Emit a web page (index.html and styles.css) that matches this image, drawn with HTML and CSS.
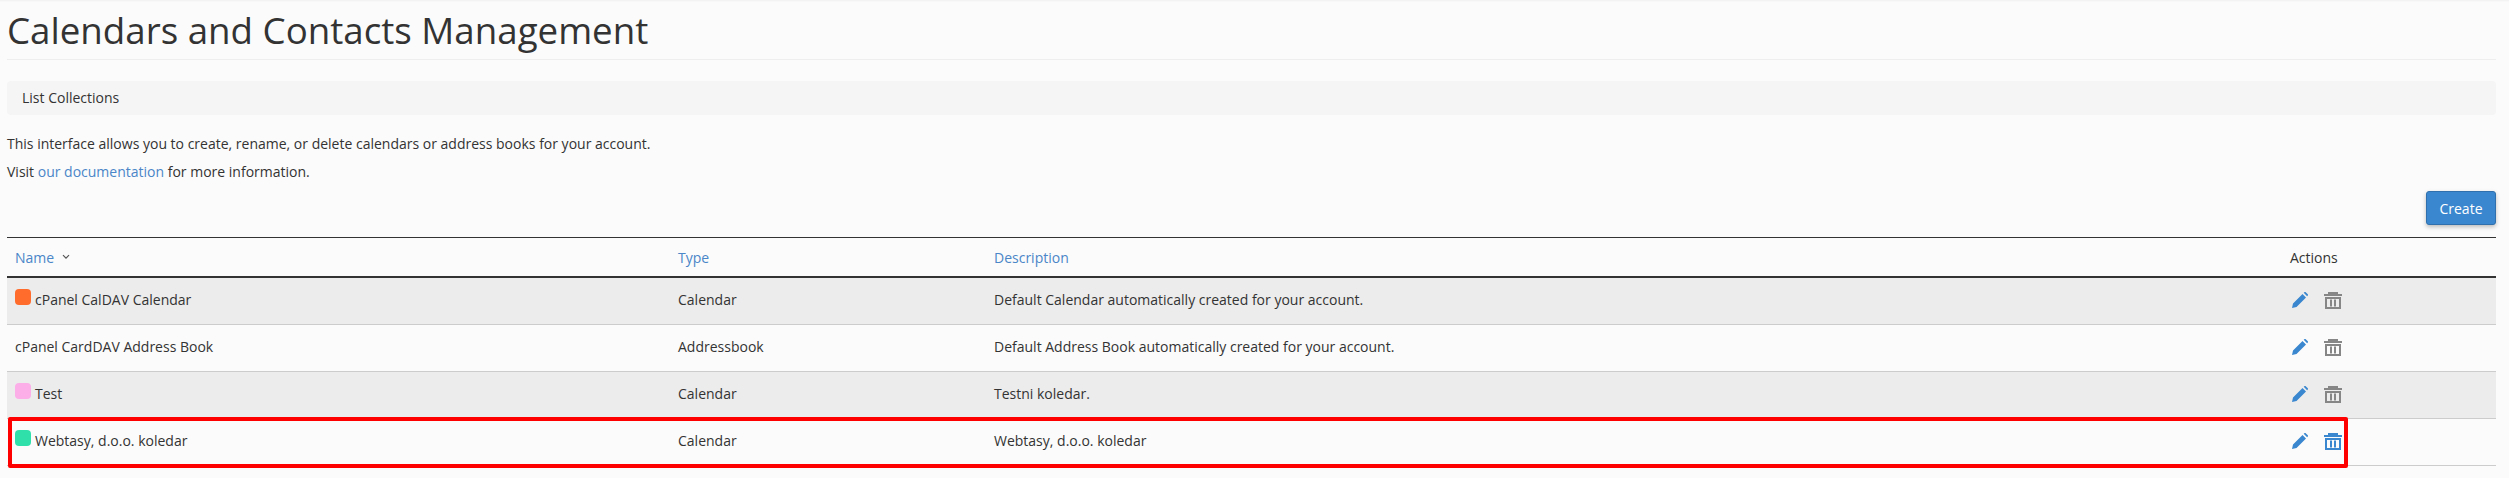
FILE: index.html
```html
<!DOCTYPE html>
<html>
<head>
    <title>Calendars and Contacts Management</title>
    <link rel="stylesheet" href="styles.css">
</head>
<body>
    <h1 class="page-title">Calendars and Contacts Management</h1>
    <div class="breadcrumb">List Collections</div>
    <p class="intro">This interface allows you to create, rename, or delete calendars or address books for your account.</p>
    <p class="intro">Visit <a href="#">our documentation</a> for more information.</p>
    <div class="toolbar">
        <button class="btn-create">Create</button>
    </div>
    <div class="table-wrap">
        <table class="collections">
            <colgroup>
                <col class="col-name">
                <col class="col-type">
                <col class="col-desc">
                <col class="col-actions">
            </colgroup>
            <thead>
                <tr>
                    <th><a href="#">Name</a>
                        <svg class="sort-icon" width="8" height="6" viewBox="0 0 8 6"><path d="M1 1.2 L4 4.2 L7 1.2" fill="none" stroke="#555" stroke-width="1.2"/></svg>
                    </th>
                    <th><a href="#">Type</a></th>
                    <th><a href="#">Description</a></th>
                    <th>Actions</th>
                </tr>
            </thead>
            <tbody>
                <tr class="striped">
                    <td><span class="swatch swatch-orange"></span>cPanel CalDAV Calendar</td>
                    <td>Calendar</td>
                    <td>Default Calendar automatically created for your account.</td>
                    <td class="actions">
                        <svg class="icon-edit" width="16" height="16" viewBox="0 0 16 16"><path d="M0 16 L1 11.5 L10.5 2 L14 5.5 L4.5 15 Z M11.7 0.8 L12.6 0 C13 -0.2 13.4 -0.1 13.7 0.2 L15.8 2.3 C16.1 2.6 16.1 3.1 15.8 3.4 L15.1 4.2 Z"/></svg>
                        <svg class="icon-trash" width="18" height="17" viewBox="0 0 18 17"><path d="M4 0 H14 V2 H18 V4 H0 V2 H4 Z M1 5 H17 V17 H1 Z M3 7 V15 H15 V7 Z M6 7.5 H8 V14.5 H6 Z M10 7.5 H12 V14.5 H10 Z" fill-rule="evenodd"/></svg>
                    </td>
                </tr>
                <tr>
                    <td>cPanel CardDAV Address Book</td>
                    <td>Addressbook</td>
                    <td>Default Address Book automatically created for your account.</td>
                    <td class="actions">
                        <svg class="icon-edit" width="16" height="16" viewBox="0 0 16 16"><path d="M0 16 L1 11.5 L10.5 2 L14 5.5 L4.5 15 Z M11.7 0.8 L12.6 0 C13 -0.2 13.4 -0.1 13.7 0.2 L15.8 2.3 C16.1 2.6 16.1 3.1 15.8 3.4 L15.1 4.2 Z"/></svg>
                        <svg class="icon-trash" width="18" height="17" viewBox="0 0 18 17"><path d="M4 0 H14 V2 H18 V4 H0 V2 H4 Z M1 5 H17 V17 H1 Z M3 7 V15 H15 V7 Z M6 7.5 H8 V14.5 H6 Z M10 7.5 H12 V14.5 H10 Z" fill-rule="evenodd"/></svg>
                    </td>
                </tr>
                <tr class="striped">
                    <td><span class="swatch swatch-pink"></span>Test</td>
                    <td>Calendar</td>
                    <td>Testni koledar.</td>
                    <td class="actions">
                        <svg class="icon-edit" width="16" height="16" viewBox="0 0 16 16"><path d="M0 16 L1 11.5 L10.5 2 L14 5.5 L4.5 15 Z M11.7 0.8 L12.6 0 C13 -0.2 13.4 -0.1 13.7 0.2 L15.8 2.3 C16.1 2.6 16.1 3.1 15.8 3.4 L15.1 4.2 Z"/></svg>
                        <svg class="icon-trash" width="18" height="17" viewBox="0 0 18 17"><path d="M4 0 H14 V2 H18 V4 H0 V2 H4 Z M1 5 H17 V17 H1 Z M3 7 V15 H15 V7 Z M6 7.5 H8 V14.5 H6 Z M10 7.5 H12 V14.5 H10 Z" fill-rule="evenodd"/></svg>
                    </td>
                </tr>
                <tr>
                    <td><span class="swatch swatch-green"></span>Webtasy, d.o.o. koledar</td>
                    <td>Calendar</td>
                    <td>Webtasy, d.o.o. koledar</td>
                    <td class="actions">
                        <svg class="icon-edit" width="16" height="16" viewBox="0 0 16 16"><path d="M0 16 L1 11.5 L10.5 2 L14 5.5 L4.5 15 Z M11.7 0.8 L12.6 0 C13 -0.2 13.4 -0.1 13.7 0.2 L15.8 2.3 C16.1 2.6 16.1 3.1 15.8 3.4 L15.1 4.2 Z"/></svg>
                        <svg class="icon-trash icon-trash-active" width="18" height="17" viewBox="0 0 18 17"><path d="M4 0 H14 V2 H18 V4 H0 V2 H4 Z M1 5 H17 V17 H1 Z M3 7 V15 H15 V7 Z M6 7.5 H8 V14.5 H6 Z M10 7.5 H12 V14.5 H10 Z" fill-rule="evenodd"/></svg>
                    </td>
                </tr>
            </tbody>
        </table>
        <div class="highlight-box"></div>
    </div>
</body>
</html>
```

FILE: styles.css
```css
html {
    background-color: #fbfbfb;
}
body {
    margin: 0;
    padding: 0 13px 0 7px;
    min-height: 478px;
    box-sizing: border-box;
    box-shadow: inset 0 2px 2px -1px #f0f0f0;
    font-family: "Open Sans", sans-serif;
    font-size: 14px;
    color: #333;
}
a {
    color: #4a86c8;
    text-decoration: none;
}
.page-title {
    margin: 0 0 21px;
    padding: 9px 0 7px;
    height: 43px;
    border-bottom: 1px solid #eee;
    font-size: 36.7px;
    line-height: 43px;
    font-weight: 400;
}
.breadcrumb {
    height: 34px;
    line-height: 34px;
    padding: 0 15px;
    background-color: #f5f5f5;
    border-radius: 4px;
    margin-bottom: 19px;
}
.intro {
    margin: 0 0 9px;
    line-height: 19px;
}
.toolbar {
    display: flex;
    justify-content: flex-end;
    margin-top: 10px;
    margin-bottom: 12px;
}
.btn-create {
    width: 70px;
    height: 34px;
    background-color: #3a87cf;
    border: 1px solid #2f70ad;
    border-radius: 3px;
    color: #fff;
    font-family: "Open Sans", sans-serif;
    font-size: 14px;
    box-shadow: 0 2px 4px rgba(0, 0, 0, 0.25);
}
.table-wrap {
    position: relative;
}
.collections {
    width: 100%;
    table-layout: fixed;
    border-collapse: separate;
    border-spacing: 0;
    border-top: 1px solid #333;
}
.col-name { width: 663px; }
.col-type { width: 316px; }
.col-desc { width: 1296px; }
.collections th {
    height: 38px;
    padding: 0 8px;
    text-align: left;
    font-weight: 400;
    border-bottom: 2px solid #333;
}
.sort-icon {
    margin-left: 4px;
    vertical-align: 3px;
}
.collections td {
    height: 42px;
    padding: 0 8px 4px;
    border-bottom: 1px solid #ccc;
}
.striped td {
    background-color: #ececec;
}
.swatch {
    display: inline-block;
    width: 16px;
    height: 16px;
    border-radius: 4px;
    margin: -4px 4px -4px 0;
    vertical-align: 4px;
}
.swatch-orange { background-color: #ff6c2c; }
.swatch-pink { background-color: #fbaee8; }
.swatch-green { background-color: #2fe0ab; }
.actions svg {
    vertical-align: middle;
}
.icon-edit {
    fill: #3a87cf;
    margin-left: 2px;
    margin-right: 12px;
}
.icon-trash {
    fill: #868686;
}
.icon-trash-active {
    fill: #3a87cf;
}
.highlight-box {
    position: absolute;
    left: 1px;
    top: 180px;
    width: 2340px;
    height: 51px;
    box-sizing: border-box;
    border: 4px solid #f00;
    border-radius: 2px;
}
```
